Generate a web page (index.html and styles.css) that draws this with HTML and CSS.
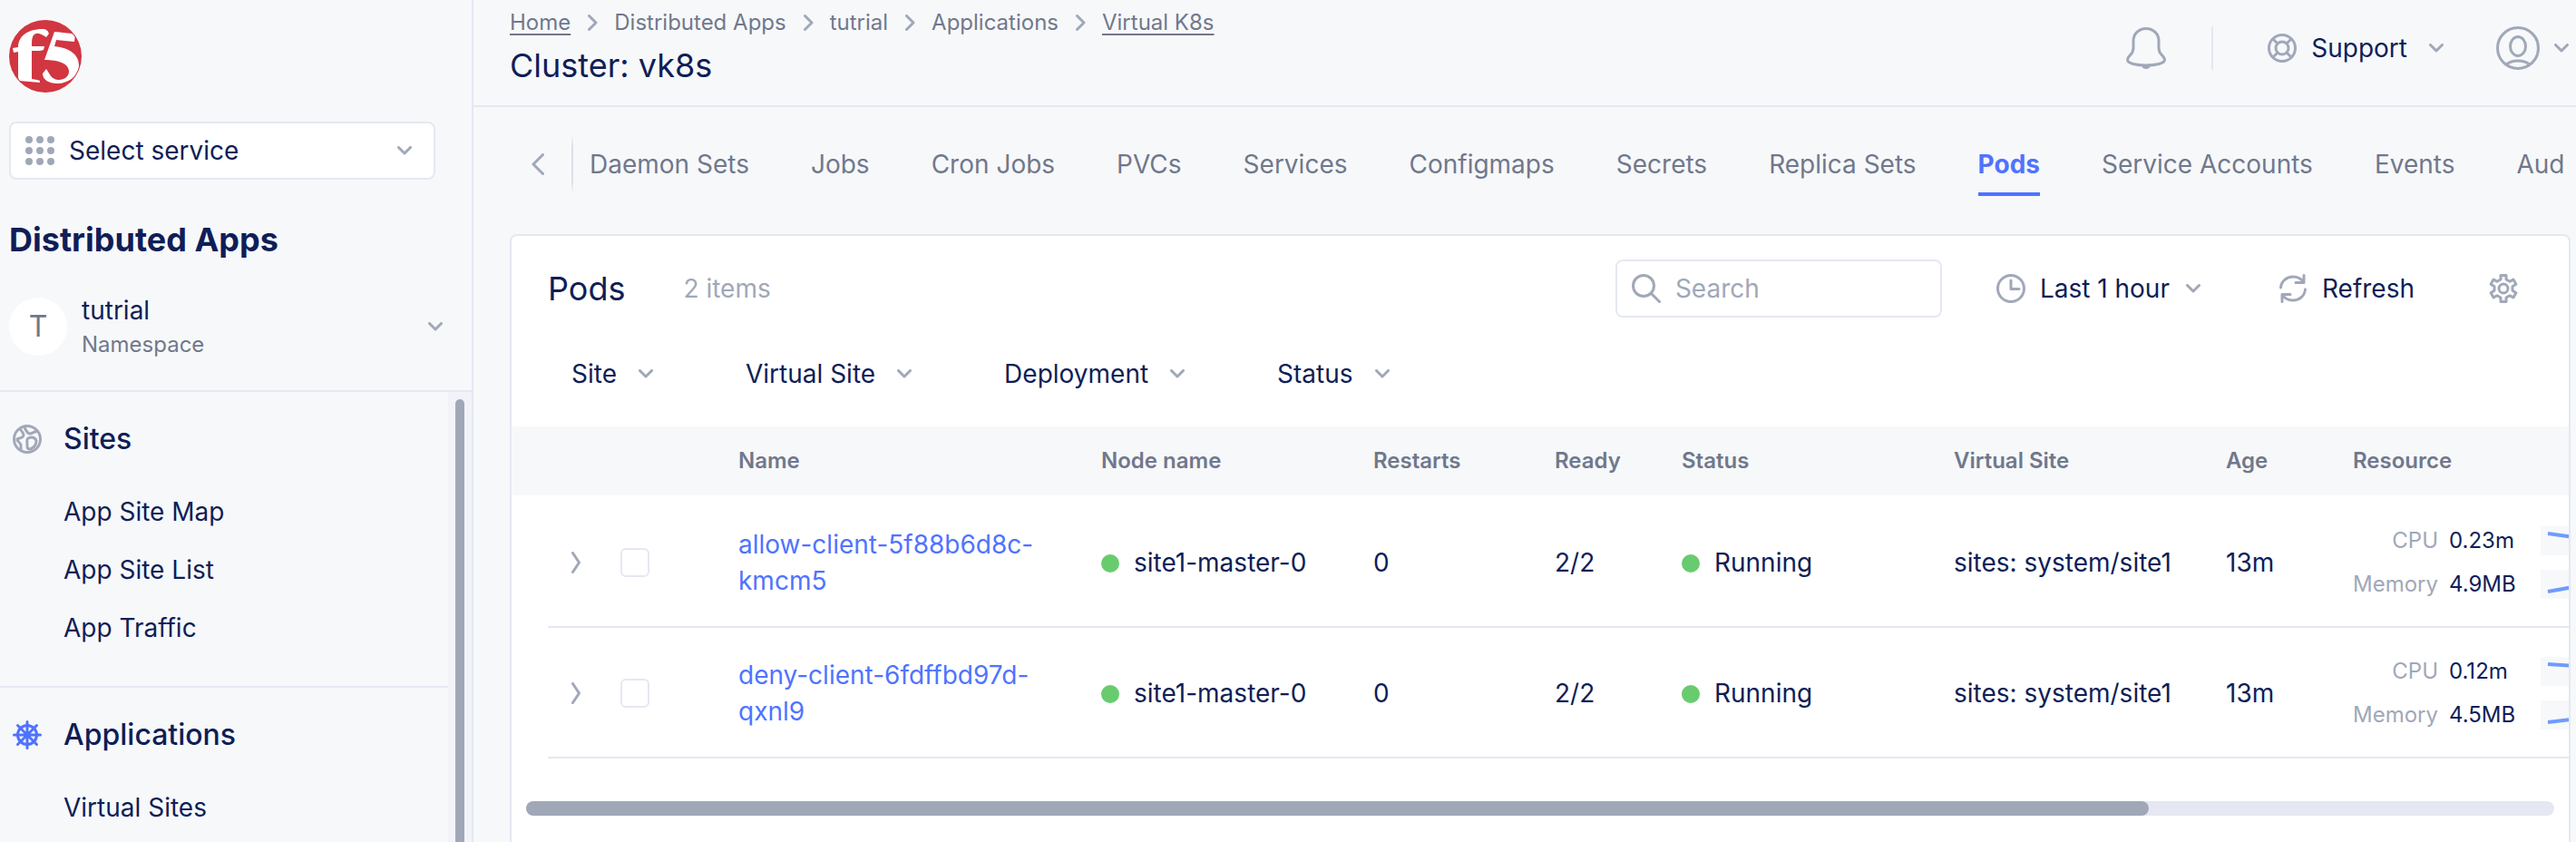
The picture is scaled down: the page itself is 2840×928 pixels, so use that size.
FILE: index.html
```html
<!DOCTYPE html>
<html lang="en">
<head>
<meta charset="utf-8">
<title>Cluster: vk8s</title>
<link rel="stylesheet" href="styles.css">
</head>
<body>
<svg class="sprite" aria-hidden="true">
  <symbol id="down" viewBox="0 0 16 10"><path d="M1.500 1.500 8 8l6.500-6.500"/></symbol>
  <symbol id="right" viewBox="0 0 10 24"><path d="M1.500 1.500 8.500 12l-7 10.500"/></symbol>
  <symbol id="crumb" viewBox="0 0 12 18"><path d="M2.500 1.500 10 9l-7.500 7.500"/></symbol>
</svg>
<div class="app">
  <aside class="sidebar">
    <div class="sidebar-top">
      <svg class="logo" viewBox="0 0 80 80" role="img" aria-label="f5">
        <defs><clipPath id="disc"><circle cx="40" cy="40" r="39"/></clipPath></defs>
        <circle cx="40" cy="40" r="40" fill="#d13641"/>
        <g clip-path="url(#disc)" fill="#fff">
          <path d="M4 31l6-1c0-11 9-20 27-20 4 0 6 2 7 5l-3 4c-4-2-7-5-11-4-4 1-5 4-5 14h14l-1 4-4 1h-9v31c4 1 8 1 9 2v2L11 67l-1-4V35l-5 1z"/>
          <path d="M50 13c8 1 15 1 23 3l-1 8-20-2-2 7c18 2 27 10 27 21 0 12-12 20-24 20-9 0-16-4-16-11l4-5c4 5 5 12 14 12 6 0 11-4 11-9 0-9-11-13-27-13z"/>
        </g>
      </svg>
      <button class="service-select">
        <svg class="grid-icon" viewBox="0 0 32 32"><circle cx="4" cy="4" r="4"/><circle cx="16" cy="4" r="4"/><circle cx="28" cy="4" r="4"/><circle cx="4" cy="16" r="4"/><circle cx="16" cy="16" r="4"/><circle cx="28" cy="16" r="4"/><circle cx="4" cy="28" r="4"/><circle cx="16" cy="28" r="4"/><circle cx="28" cy="28" r="4"/></svg>
        <span>Select service</span>
        <svg class="down"><use href="#down"/></svg>
      </button>
      <h2 class="workspace">Distributed Apps</h2>
      <button class="namespace">
        <span class="avatar">T</span>
        <span class="namespace-text"><span>tutrial</span><small>Namespace</small></span>
        <svg class="down"><use href="#down"/></svg>
      </button>
    </div>
    <div class="nav-area">
      <nav class="nav">
        <section class="nav-group">
          <h3><svg class="icon" viewBox="0 0 32 32"><circle cx="16" cy="16" r="14.500"/><path d="M8 5c3 3 4 5 4 7-1 4-8 2-7 5 1 2 4 3 4 6v5M13 3c2 4 3 7 6 7 2 0 4-2 8-3M17 15c4-2 8-1 9 3 0 5-4 9-8 9-2 0-2-2-2-5s-1-6 1-7z"/></svg>Sites</h3>
          <a href="#">App Site Map</a>
          <a href="#">App Site List</a>
          <a href="#">App Traffic</a>
        </section>
        <section class="nav-group">
          <h3><svg class="icon helm" viewBox="0 0 32 32"><circle cx="16" cy="16" r="10.500"/><path d="M16 1.500v29M1.500 16h29M5.500 5.500l21 21M26.500 5.500l-21 21"/><circle cx="16" cy="16" r="2.500"/></svg>Applications</h3>
          <a href="#">Virtual Sites</a>
        </section>
      </nav>
      <div class="vscroll"><div class="vthumb"></div></div>
    </div>
  </aside>

  <main class="main">
    <header class="topbar">
      <div>
        <nav class="crumbs" aria-label="Breadcrumb">
          <a class="linked" href="#">Home</a><svg><use href="#crumb"/></svg>
          <a href="#">Distributed Apps</a><svg><use href="#crumb"/></svg>
          <a href="#">tutrial</a><svg><use href="#crumb"/></svg>
          <a href="#">Applications</a><svg><use href="#crumb"/></svg>
          <a class="linked" href="#">Virtual K8s</a>
        </nav>
        <h1>Cluster: vk8s</h1>
      </div>
      <div class="tools">
        <button class="bell" aria-label="Notifications"><svg viewBox="0 0 44 48"><path d="M22 2.500c-8 0-14 6-14 13.500v8c0 8-6.500 8-6.500 13 0 4 10 6 20.500 6s20.500-2 20.500-6c0-5-6.500-5-6.500-13v-8C36 8.500 30 2.500 22 2.500z"/><path class="solid" d="M17 43h10c0 2-2 4-5 4s-5-2-5-4z"/></svg></button>
        <button class="support"><svg class="icon" viewBox="0 0 32 32"><circle cx="16" cy="16" r="14.500"/><circle cx="16" cy="16" r="7"/><path d="M6 6l5 5M26 6l-5 5M6 26l5-5M26 26l-5-5"/></svg><span>Support</span><svg class="down"><use href="#down"/></svg></button>
        <button class="account" aria-label="Account"><svg class="user" viewBox="0 0 48 48"><circle cx="24" cy="24" r="22.500"/><ellipse cx="24" cy="22" rx="8.500" ry="10.500"/><path d="M11.500 42c5-5.500 20-5.500 25 0"/></svg><svg class="down"><use href="#down"/></svg></button>
      </div>
    </header>

    <div class="tabbar">
      <button class="back" aria-label="Previous tabs"><svg viewBox="0 0 14 24"><path d="M12.500 1.500 2 12l10.500 10.500"/></svg></button>
      <nav class="tabs">
        <a href="#">Daemon Sets</a><a href="#">Jobs</a><a href="#">Cron Jobs</a><a href="#">PVCs</a><a href="#">Services</a><a href="#">Configmaps</a><a href="#">Secrets</a><a href="#">Replica Sets</a><a class="active" href="#">Pods</a><a href="#">Service Accounts</a><a href="#">Events</a><a href="#">Aud</a>
      </nav>
    </div>

    <section class="card">
      <div class="card-head">
        <h2>Pods</h2>
        <span class="count">2 items</span>
        <label class="search">
          <svg class="icon" viewBox="0 0 32 32"><circle cx="13" cy="13" r="11.500"/><path d="M21.500 21.500 30.500 30.500"/></svg>
          <input type="text" placeholder="Search" aria-label="Search">
        </label>
        <button class="range"><svg class="icon" viewBox="0 0 32 32"><circle cx="16" cy="16" r="14.500"/><path d="M16 7v9.500h9"/></svg><span>Last 1 hour</span><svg class="down"><use href="#down"/></svg></button>
        <button class="refresh"><svg class="icon" viewBox="0 0 32 32"><path d="M2.500 15C3 8 9 3 16 3c5 0 9 2 11.500 6M29.500 17c-.5 7-6.500 12-13.500 12-5 0-9-2-11.500-6M28 1.500v8h-9M4 30.500v-8h9"/></svg><span>Refresh</span></button>
        <button class="settings" aria-label="Settings"><svg class="icon" viewBox="0 0 32 32"><path d="M13 1.500h6v4.500l4 2.300 3.900-2.200 3 5.100-3.900 2.500v4.600l3.900 2.500-3 5.100-3.900-2.200-4 2.300v4.500h-6v-4.500l-4-2.300-3.900 2.200-3-5.100 3.900-2.500v-4.600l-3.900-2.500 3-5.100 3.900 2.200 4-2.300z"/><circle cx="16" cy="16" r="5"/></svg></button>
      </div>
      <div class="filters">
        <button>Site<svg class="down"><use href="#down"/></svg></button>
        <button>Virtual Site<svg class="down"><use href="#down"/></svg></button>
        <button>Deployment<svg class="down"><use href="#down"/></svg></button>
        <button>Status<svg class="down"><use href="#down"/></svg></button>
      </div>
      <div class="table-wrap">
        <table>
          <colgroup><col class="c-expand"><col class="c-check"><col class="c-name"><col class="c-wide"><col class="c-mid"><col class="c-slim"><col class="c-wide"><col class="c-wide"><col class="c-slim"><col class="c-name"></colgroup>
          <thead><tr><th></th><th></th><th>Name</th><th>Node name</th><th>Restarts</th><th>Ready</th><th>Status</th><th>Virtual Site</th><th>Age</th><th>Resource</th></tr></thead>
          <tbody>
            <tr>
              <td class="expand"><button aria-label="Expand row"><svg><use href="#right"/></svg></button></td>
              <td><input type="checkbox" aria-label="Select allow-client"></td>
              <td><a href="#">allow-client-5f88b6d8c-kmcm5</a></td>
              <td><span class="dot"></span>site1-master-0</td>
              <td>0</td><td>2/2</td>
              <td><span class="dot"></span>Running</td>
              <td>sites: system/site1</td><td>13m</td>
              <td><div class="resource">
                <span>CPU</span><b>0.23m</b><svg viewBox="0 0 120 32"><path d="M8 8l100 14"/></svg>
                <span>Memory</span><b>4.9MB</b><svg viewBox="0 0 120 32"><path d="M8 24l100-18"/></svg>
              </div></td>
            </tr>
            <tr>
              <td class="expand"><button aria-label="Expand row"><svg><use href="#right"/></svg></button></td>
              <td><input type="checkbox" aria-label="Select deny-client"></td>
              <td><a href="#">deny-client-6fdffbd97d-qxnl9</a></td>
              <td><span class="dot"></span>site1-master-0</td>
              <td>0</td><td>2/2</td>
              <td><span class="dot"></span>Running</td>
              <td>sites: system/site1</td><td>13m</td>
              <td><div class="resource">
                <span>CPU</span><b>0.12m</b><svg viewBox="0 0 120 32"><path d="M8 8l100 6"/></svg>
                <span>Memory</span><b>4.5MB</b><svg viewBox="0 0 120 32"><path d="M8 24l100-12"/></svg>
              </div></td>
            </tr>
          </tbody>
        </table>
      </div>
      <div class="hscroll"><div class="hthumb"></div></div>
    </section>
  </main>
</div>
</body>
</html>
```
FILE: styles.css
```css
:root {
  --ink: #0f1e57;
  --muted: #70788c;
  --faint: #a0a8b8;
  --line: #e5e8f2;
  --bg: #f7f8fa;
  --blue: #4f73ff;
}
* { box-sizing: border-box; }
body {
  margin: 0;
  background: var(--bg);
  color: var(--ink);
  font: 28px/40px Inter, "Liberation Sans", sans-serif;
}
h1, h2, h3 { margin: 0; font-weight: 400; }
a { color: inherit; text-decoration: none; }
button {
  display: flex;
  align-items: center;
  padding: 0;
  border: 0;
  background: none;
  color: inherit;
  font: inherit;
}
svg {
  flex: none;
  fill: none;
  stroke: var(--faint);
  stroke-width: 3;
  stroke-linecap: round;
  stroke-linejoin: round;
}
.sprite { display: none; }
.icon { width: 32px; height: 32px; }
.down { width: 16px; height: 10px; overflow: visible; }

.app { display: flex; height: 100vh; overflow: hidden; }

/* Sidebar */
.sidebar {
  display: flex;
  flex: none;
  flex-direction: column;
  width: 522px;
  border-right: 2px solid var(--line);
}
.sidebar-top { padding: 22px 32px 32px 10px; border-bottom: 2px solid var(--line); }
.logo { display: block; width: 80px; height: 80px; stroke: none; }
.service-select {
  width: 470px;
  height: 64px;
  margin-top: 32px;
  padding: 0 24px 0 16px;
  border: 2px solid var(--line);
  border-radius: 8px;
  background: #fff;
}
.grid-icon { width: 32px; height: 32px; margin-right: 16px; fill: var(--faint); stroke: none; }
.service-select .down, .namespace .down { margin-left: auto; }
.workspace { margin-top: 42px; font-size: 36px; font-weight: 700; line-height: 48px; }
.namespace { width: 100%; margin-top: 34px; text-align: left; }
.avatar {
  width: 64px;
  margin-right: 16px;
  border-radius: 50%;
  background: #fff;
  color: var(--muted);
  font-size: 32px;
  line-height: 64px;
  text-align: center;
}
.namespace-text { display: flex; flex-direction: column; }
.namespace-text small { color: var(--muted); font-size: 24px; line-height: 36px; }
.nav-area { display: flex; flex: 1; min-height: 0; }
.nav { flex: 1; overflow: hidden; }
.nav-group { display: flex; flex-direction: column; gap: 24px; padding: 32px 14px 44px; border-bottom: 2px solid var(--line); }
.nav-group h3 { display: flex; align-items: center; gap: 24px; margin-bottom: 16px; font-size: 32px; font-weight: 500; }
.nav-group a { padding-left: 56px; }
.helm { stroke: var(--blue); }
.vscroll { width: 26px; padding: 8px 8px 0; background: #f1f3f9; }
.vthumb { height: 100%; border-radius: 5px 5px 0 0; background: var(--faint); }

/* Header */
.main { flex: 1; min-width: 0; }
.topbar {
  display: flex;
  align-items: flex-start;
  justify-content: space-between;
  height: 118px;
  padding: 7px 8px 0 40px;
  border-bottom: 2px solid var(--line);
}
.crumbs { display: flex; align-items: center; gap: 18px; color: var(--muted); font-size: 24px; line-height: 36px; }
.crumbs svg { width: 12px; height: 18px; }
.linked { text-decoration: underline; text-decoration-thickness: 2px; text-underline-offset: 4px; }
h1 { margin-top: 5px; font-size: 36px; line-height: 48px; }
.tools { display: flex; align-items: center; padding-top: 22px; }
.tools button { height: 48px; }
.bell { padding-right: 50px; border-right: 2px solid var(--line); }
.bell svg { width: 44px; height: 48px; }
.bell .solid { fill: var(--faint); stroke: none; }
.support { margin-left: 60px; }
.support .icon, .range .icon, .refresh .icon { margin-right: 16px; }
.support .down { margin-left: 24px; }
.account { margin-left: 58px; }
.user { width: 48px; height: 48px; margin-right: 16px; }

/* Tabs */
.tabbar { display: flex; align-items: center; height: 126px; margin-bottom: 14px; padding: 0 6px 0 64px; }
.back { height: 64px; padding-right: 30px; }
.back svg { width: 14px; height: 24px; }
.tabs {
  display: flex;
  flex: 1;
  gap: 68px;
  min-width: 0;
  padding-left: 20px;
  overflow: hidden;
  background: linear-gradient(transparent, #dcdfe6 20%, #dcdfe6 80%, transparent) no-repeat left / 2px 64px;
  color: var(--muted);
  white-space: nowrap;
}
.tabs a { padding: 15px 0 11px; border-bottom: 4px solid transparent; }
.tabs .active { border-color: var(--blue); color: var(--blue); font-weight: 700; }

/* Card */
.card {
  height: 100%;
  margin: 0 6px 0 40px;
  border: 2px solid var(--line);
  border-radius: 8px;
  background: #fff;
}
.card-head { display: flex; align-items: center; padding: 26px 56px 0 40px; }
.card-head h2 { font-size: 36px; }
.count { margin-left: 64px; color: var(--faint); }
.search {
  display: flex;
  align-items: center;
  gap: 16px;
  width: 360px;
  height: 64px;
  margin-left: auto;
  padding: 0 16px;
  border: 2px solid var(--line);
  border-radius: 8px;
}
.search input { width: 100%; min-width: 0; padding: 0; border: 0; outline: 0; background: none; color: inherit; font: inherit; }
.search input::placeholder { color: var(--faint); opacity: 1; }
.range { margin-left: 60px; }
.range .down { margin-left: 18px; }
.refresh { margin-left: 86px; }
.settings { margin-left: 82px; }
.filters { display: flex; gap: 102px; padding: 42px 66px 38px; }
.filters button { gap: 24px; }

/* Table */
.table-wrap { overflow: hidden; }
table { width: 2410px; border-collapse: separate; border-spacing: 0; table-layout: fixed; }
.c-expand { width: 100px; }
.c-check { width: 130px; }
.c-name { width: 400px; }
.c-wide { width: 300px; }
.c-mid { width: 200px; }
.c-slim { width: 140px; }
th, td { padding: 0 20px; text-align: left; }
th { height: 78px; border-bottom: 2px solid #fff; background: var(--bg); color: var(--muted); font-size: 24px; font-weight: 600; }
td { height: 144px; padding-top: 2px; border-bottom: 2px solid var(--line); }
td.expand {
  padding-left: 66px;
  border-color: transparent;
  background: linear-gradient(var(--line), var(--line)) no-repeat right bottom / 60px 2px border-box;
}
td a { color: var(--blue); }
.expand svg { width: 10px; height: 24px; }
td input {
  display: block;
  width: 32px;
  height: 32px;
  margin: 0;
  border: 2px solid var(--line);
  border-radius: 6px;
  background: #fff;
  appearance: none;
}
.dot { display: inline-block; width: 20px; height: 20px; margin-right: 16px; border-radius: 50%; background: #68cc6f; vertical-align: -1px; }
.resource { display: grid; grid-template-columns: 94px 89px 120px; gap: 16px 12px; font-size: 24px; line-height: 32px; }
.resource span { color: var(--faint); text-align: right; }
.resource b { font-weight: 400; }
.resource svg { width: 120px; height: 32px; background: var(--bg); stroke: #6e9bff; stroke-width: 4; stroke-linecap: butt; }
.hscroll { margin: 47px 16px 0; border-radius: 8px; background: var(--line); }
.hthumb { width: 80%; height: 16px; border-radius: 8px; background: var(--faint); }
```
